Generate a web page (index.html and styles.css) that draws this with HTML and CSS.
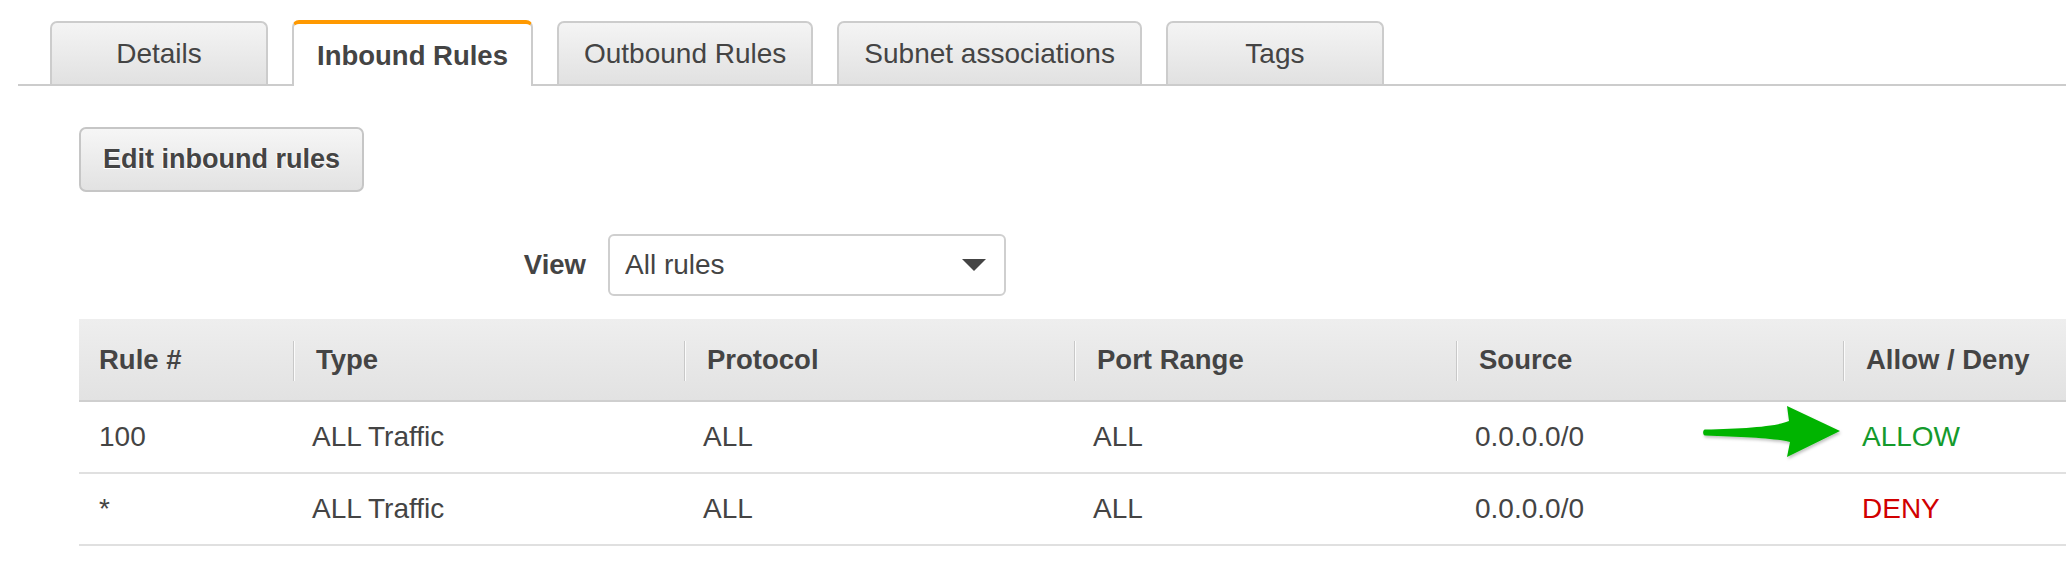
FILE: index.html
```html
<!DOCTYPE html>
<html lang="en">
<head>
<meta charset="utf-8">
<title>Inbound Rules</title>
<link rel="stylesheet" href="styles.css">
</head>
<body>
<div class="tabs">
  <div class="tab">Details</div>
  <div class="tab active">Inbound Rules</div>
  <div class="tab">Outbound Rules</div>
  <div class="tab">Subnet associations</div>
  <div class="tab">Tags</div>
</div>
<div class="content">
  <button class="btn">Edit inbound rules</button>
  <div class="filter">
    <span class="filter-label">View</span>
    <div class="select">
      <span>All rules</span>
      <span class="caret"></span>
    </div>
  </div>
  <div class="table">
    <div class="row head">
      <div class="cell">Rule #</div>
      <div class="cell sep">Type</div>
      <div class="cell sep">Protocol</div>
      <div class="cell sep">Port Range</div>
      <div class="cell sep">Source</div>
      <div class="cell sep">Allow / Deny</div>
    </div>
    <div class="row">
      <div class="cell">100</div>
      <div class="cell">ALL Traffic</div>
      <div class="cell">ALL</div>
      <div class="cell">ALL</div>
      <div class="cell">0.0.0.0/0</div>
      <div class="cell allow">ALLOW</div>
    </div>
    <div class="row">
      <div class="cell">*</div>
      <div class="cell">ALL Traffic</div>
      <div class="cell">ALL</div>
      <div class="cell">ALL</div>
      <div class="cell">0.0.0.0/0</div>
      <div class="cell deny">DENY</div>
    </div>
  </div>
</div>
<svg class="arrow" width="142" height="58" viewBox="0 0 142 58">
  <defs>
    <filter id="sh" x="-10%" y="-20%" width="130%" height="150%">
      <feDropShadow dx="1" dy="2" stdDeviation="1.5" flood-color="#000" flood-opacity="0.25"/>
    </filter>
  </defs>
  <path filter="url(#sh)" fill="#00b400" d="M3,25.5 C40,24.5 72,23 87,17 L85,2 L138,27 L85,53 L88,38 C72,34 40,33 3,31.5 C0.5,31.3 0.5,25.7 3,25.5 Z"/>
</svg>
</body>
</html>
```
FILE: styles.css
```css
html, body {
  margin: 0;
  padding: 0;
  background: #fff;
}
body {
  font-family: "Liberation Sans", Arial, Helvetica, sans-serif;
  color: #444;
  font-size: 28px;
  position: relative;
  width: 2066px;
  height: 572px;
  overflow: hidden;
}
.tabs {
  display: flex;
  align-items: flex-end;
  gap: 24px;
  margin-left: 18px;
  padding-left: 32px;
  padding-top: 20px;
  border-bottom: 2px solid #cccccc;
}
.tab {
  box-sizing: border-box;
  height: 63px;
  min-width: 218px;
  padding: 0 25px;
  display: flex;
  align-items: center;
  justify-content: center;
  border: 2px solid #cccccc;
  border-bottom: none;
  border-radius: 7px 7px 0 0;
  background: linear-gradient(#f4f4f4, #e1e1e1);
  color: #444;
  font-size: 28px;
  white-space: nowrap;
}
.tab.active {
  height: 66px;
  margin-bottom: -2px;
  padding: 2px 23px 0;
  background: #fff;
  border-top: 4px solid #ff9900;
  font-weight: bold;
  font-size: 27.5px;
  min-width: 0;
}
.content {
  padding-left: 79px;
}
.btn {
  display: flex;
  align-items: center;
  justify-content: center;
  box-sizing: border-box;
  margin-top: 41px;
  width: 285px;
  height: 65px;
  padding: 0;
  border: 2px solid #c6c6c6;
  border-radius: 7px;
  background: linear-gradient(#f6f6f6, #e2e2e2);
  font-family: "Liberation Sans", Arial, Helvetica, sans-serif;
  font-weight: bold;
  font-size: 27px;
  color: #444;
  text-shadow: -1px 1px 0 #fff;
}
.filter {
  display: flex;
  align-items: center;
  justify-content: flex-end;
  gap: 22px;
  width: 927px;
  margin-top: 42px;
}
.filter-label {
  font-weight: bold;
  font-size: 27.5px;
}
.select {
  box-sizing: border-box;
  width: 398px;
  height: 62px;
  border: 2px solid #cfcfcf;
  border-radius: 6px;
  display: flex;
  align-items: center;
  justify-content: space-between;
  padding: 0 18px 0 15px;
  font-size: 28px;
}
.caret {
  width: 0;
  height: 0;
  border-left: 12px solid transparent;
  border-right: 12px solid transparent;
  border-top: 12px solid #444;
}
.table {
  margin-top: 23px;
}
.row {
  display: grid;
  grid-template-columns: 214px 391px 390px 382px 387px 1fr;
  height: 72px;
  box-sizing: border-box;
  border-bottom: 2px solid #e0e0e0;
  align-items: center;
}
.row.head {
  height: 83px;
  background: linear-gradient(#eeeeee, #e2e2e2);
  border-bottom: 2px solid #cfcfcf;
  font-weight: bold;
}
.cell {
  padding-left: 20px;
  white-space: nowrap;
  font-size: 28px;
}
.head .cell {
  font-size: 27.5px;
  padding-left: 20px;
  position: relative;
  height: 100%;
  display: flex;
  align-items: center;
}
.head .cell.sep {
  padding-left: 23px;
}
.head .cell.sep::before {
  content: "";
  position: absolute;
  left: 0;
  top: 22px;
  width: 1px;
  height: 40px;
  background: #c8c8c8;
  box-shadow: 1px 0 0 #fbfbfb;
}
.row:not(.head) .cell + .cell {
  padding-left: 19px;
}
.allow {
  color: #149a2c;
}
.deny {
  color: #d10000;
}
.arrow {
  position: absolute;
  left: 1702px;
  top: 404px;
}
```
